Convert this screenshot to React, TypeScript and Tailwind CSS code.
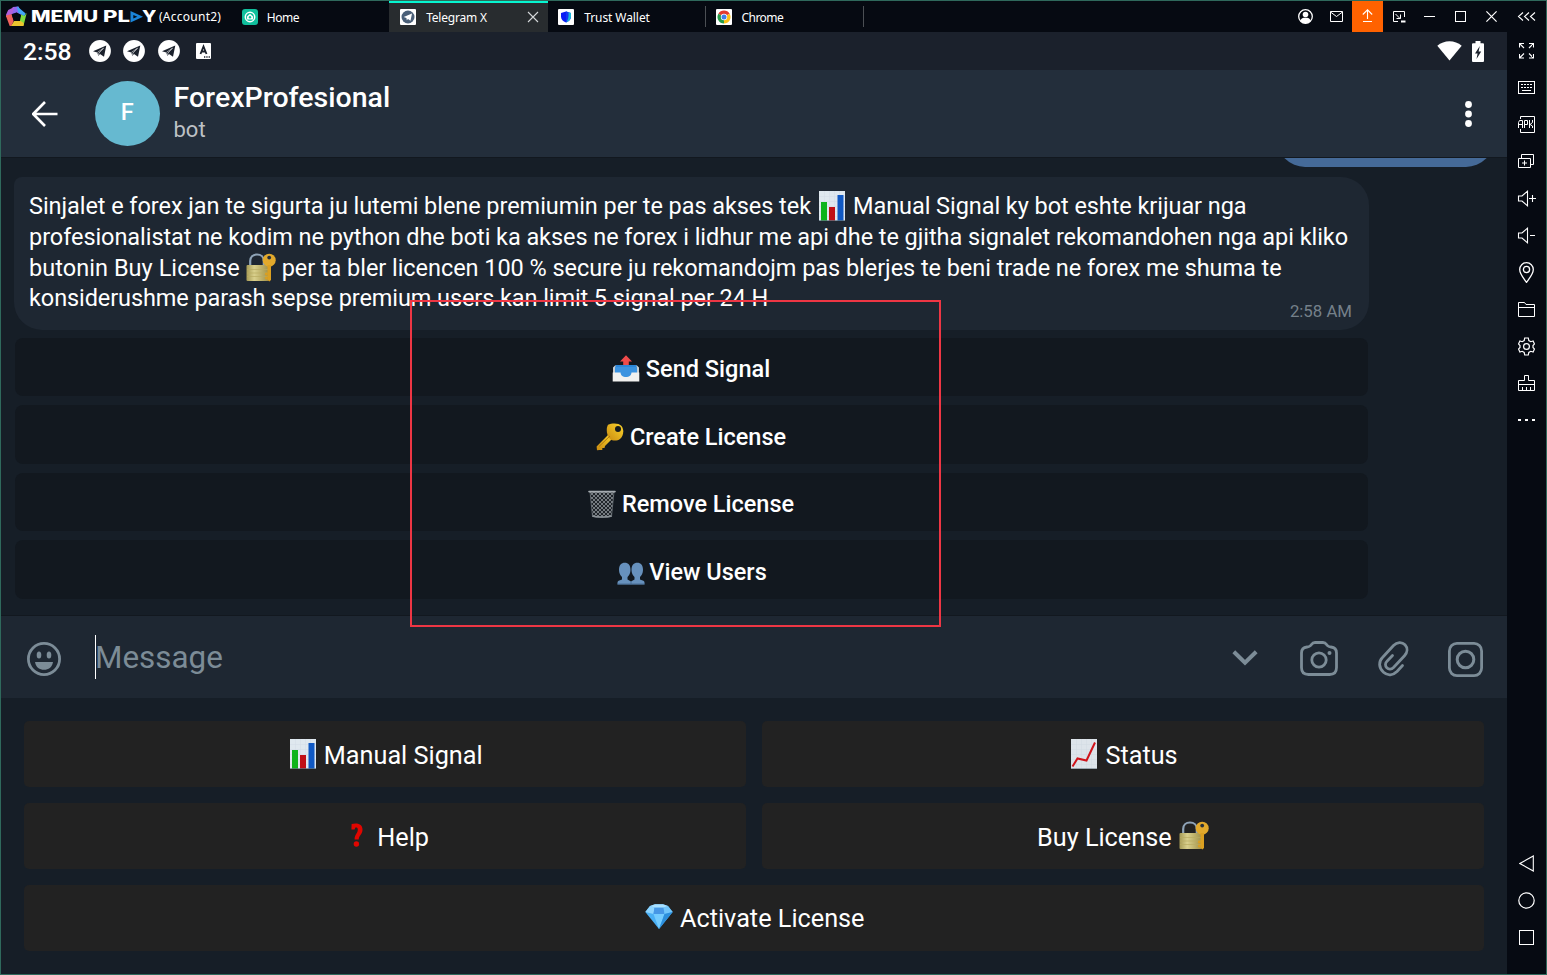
import React from "react";

type P = { className?: string };

const S = ({ w, h, vb, className, children }: { w: number; h: number; vb?: string; className?: string; children: React.ReactNode }) => (
  <svg width={w} height={h} viewBox={vb ?? `0 0 ${w} ${h}`} fill="none" className={"shrink-0 " + (className ?? "")}>
    {children}
  </svg>
);

/* ---------- emoji ---------- */
const BarChart = ({ className }: P) => (
  <S w={26} h={30} className={className}>
    <rect x="0" y="0" width="26" height="30" fill="#dfe8ef" />
    <path d="M0 5.5H26M0 10.5H26M0 15.5H26M0 20.5H26M0 25.5H26M5.5 0V30M10.5 0V30M15.5 0V30M20.5 0V30" stroke="#d2dde6" strokeWidth=".5" />
    <rect x="2" y="11" width="6" height="19" fill="#0db41c" />
    <rect x="10" y="16" width="6" height="14" fill="#c01016" />
    <rect x="18.500" y="4" width="6" height="26" fill="#1059c4" />
    <path d="M0 29.600H26" stroke="#5f7480" strokeWidth=".8" />
  </S>
);
const LineChart = () => (
  <S w={26} h={30}>
    <rect width="26" height="30" fill="#dde4ea" />
    <path d="M0 5.5H26M0 10.5H26M0 15.5H26M0 20.5H26M0 25.5H26M5.5 0V30M10.5 0V30M15.5 0V30M20.5 0V30" stroke="#d0dae2" strokeWidth=".5" />
    <path d="M1.500 27.500L6.500 19.500L15.500 21.500L24 3.500" stroke="#d0141b" strokeWidth="2" />
    <path d="M0 29.600H26" stroke="#7f8d97" strokeWidth=".8" />
  </S>
);
const LockKey = ({ className }: P) => (
  <S w={30} h={29} className={className}>
    <defs>
      <linearGradient id="brass" x1="0" x2="1">
        <stop offset="0" stopColor="#a59a55" />
        <stop offset=".35" stopColor="#d9d08c" />
        <stop offset="1" stopColor="#a2924a" />
      </linearGradient>
    </defs>
    <path d="M4.200 13V8C4.200 4 7 1.500 11 1.500s6.800 2.500 6.800 6.500V13" stroke="#8ea3b7" strokeWidth="2.200" />
    <rect x=".5" y="12" width="22" height="16" rx="1" fill="url(#brass)" />
    <path d="M1 16.500H22M1 20H22M1 23.500H22" stroke="#b9ac62" strokeWidth=".7" />
    <circle cx="23.200" cy="7.200" r="6.500" fill="#e2a92c" />
    <circle cx="23.200" cy="4.600" r="1.900" fill="#27303a" />
    <path d="M21.500 12H25V27L23.300 28.500L21.500 27Z" fill="#dba021" />
    <path d="M21.500 20H19.500V22H21.500M21.500 24H19.500V26H21.500" fill="#dba021" stroke="#dba021" strokeWidth=".8" />
  </S>
);
const Outbox = () => (
  <S w={28} h={27} className="mt-[4px]">
    <path d="M3.500 10H24.500L27 18H1Z" fill="#1b5fa8" />
    <path d="M4 10H24L26 14.500H2Z" fill="#2c86d8" />
    <path d="M1 12.500L3.500 10V18H1ZM27 12.500L24.500 10V18H27Z" fill="#c8cdd1" />
    <path d="M3 12H25V20L18 24H10L3 20Z" fill="#3b93e0" />
    <path d="M.7 17.500H8.500C9 21 11 22 14 22S19 21 19.500 17.500H27.300V26.500H.7Z" fill="#f1f1ef" />
    <path d="M14 .3L20 6.500H16.800V10H11.200V6.500H8Z" fill="#ef4b4b" />
  </S>
);
const KeyEmoji = () => (
  <S w={28} h={28} className="mt-[5px]">
    <defs>
      <linearGradient id="gold" x1="1" y1="0" x2="0" y2="1">
        <stop offset="0" stopColor="#fbd52c" />
        <stop offset="1" stopColor="#c98a10" />
      </linearGradient>
    </defs>
    <path d="M13 11L17 15L9 23L8.500 25H6.300V27H3.500L1 27.300L.6 23.500Z" fill="url(#gold)" />
    <path d="M12 1.800C16-.2 23-.2 25.500 3C28.500 7 27.500 13 24 16C21 18.300 16.500 18 14 16C11 13.500 9.500 6 12 1.800Z" fill="url(#gold)" />
    <path d="M3 23.500L14 13" stroke="#a8730d" strokeWidth=".9" />
    <circle cx="22" cy="6" r="3" fill="#151a1d" />
  </S>
);
const Trash = () => (
  <S w={28} h={28} className="mt-[3.500px]">
    <defs>
      <pattern id="mesh" width="4" height="4" patternUnits="userSpaceOnUse">
        <rect width="4" height="4" fill="#20252a" />
        <path d="M0 0L4 4M4 0L0 4" stroke="#8b9297" strokeWidth=".8" />
      </pattern>
    </defs>
    <path d="M2 2H26L23.500 26.500C19 27.700 9 27.700 4.500 26.500Z" fill="url(#mesh)" stroke="#737a80" strokeWidth=".7" />
    <path d="M1 1.600H27" stroke="#a5abb0" strokeWidth="1.600" strokeLinecap="round" />
    <path d="M4.300 26C9 27.400 19 27.400 23.700 26" stroke="#8a9196" strokeWidth="1.400" />
  </S>
);
const People = () => (
  <S w={28} h={23} className="mt-[7px] mr-[-2px] ml-[2px]">
    <g fill="#6791bd">
      <path d="M2 8C2 3 4.300.7 7.800.7S13.500 3 13.500 8C13.500 11.500 12 13.500 10.500 15V17.500L14 19.500V22.500H.5V20.500C.6 19 2 18.500 5 17.500V15C3.500 13.500 2 11.500 2 8Z" />
      <path d="M14.500 8C14.500 3 16.800.7 20.300.7S26 3 26 8C26 11.500 24.500 13.500 23 15V17.500C26 18.500 27.500 19 27.500 20.500V22.500H14V19.500L17.500 17.500V15C16 13.500 14.500 11.500 14.500 8Z" />
    </g>
    <path d="M14 19V22.500M.5 22H27.500" stroke="#41658c" strokeWidth=".8" />
  </S>
);
const Question = () => (
  <S w={12} h={24}>
    <path d="M.4 6.500L.6 1C4 0 11.500-.4 11.500 6.500C11.500 11.500 8 12 7.700 16.500H3.600C3.400 11.500 6.800 10.500 6.800 6.800C6.800 4.400 5.300 4.300 4.200 4.800L3.600 6.500Z" fill="#e10600" />
    <circle cx="5.400" cy="21" r="2.700" fill="#e10600" />
  </S>
);
const Gem = () => (
  <S w={28} h={25}>
    <path d="M5 2L10 .3H18L23 2L27.700 8L14 25L.3 8Z" fill="#4ab0f5" />
    <path d="M5 2L9.500 3.500L8.500 10L.3 8Z" fill="#8ed5ff" />
    <path d="M9.500 3.500H18.500L19.500 10H8.500Z" fill="#4697e6" />
    <path d="M23 2L18.500 3.500L19.500 10L27.700 8Z" fill="#72c6fb" />
    <path d="M8.500 10H19.500L14 25Z" fill="#74ccff" />
    <path d="M19.500 10L27.700 8L14 25Z" fill="#2d8fdc" />
    <path d="M5 2L10 .3H18L23 2L18.500 3.500H9.500Z" fill="#a9e0ff" />
  </S>
);

/* ---------- window bar ---------- */
const Brand = () => (
  <S w={150} h={22} className="ml-[5px]">
    <g transform="translate(-0.300 0)">
      <path d="M7 1L13 .5L16 9L11 6.500L6 8Z" fill="#9068f0" />
      <path d="M11 0L20 7.500L18.500 10.500L12.500 6.500Z" fill="#41a5f5" />
      <path d="M21 7L18 19L13.500 18.500L15.500 8.500L18.500 10Z" fill="#7fdc3d" />
      <path d="M18 20H5L8.500 15H15L18 17Z" fill="#ecc52e" />
      <path d="M0 9.500L5.500 7L8 15L5.500 20H4Z" fill="#f0625d" />
      <path d="M0 9.500L2.500 4L8.500 1L6.500 8Z" fill="#b060dc" />
      <path d="M10.500 6.500L15 9.800L13.300 14.700H8.200L6.500 9.800Z" fill="#060a12" />
    </g>
    <text x="25" y="16.300" textLength="67" lengthAdjust="spacingAndGlyphs" fontFamily="Inter" fontWeight="800" fontSize="15.300" fill="#fff">MEMU</text>
    <text x="97" y="16.300" textLength="27" lengthAdjust="spacingAndGlyphs" fontFamily="Inter" fontWeight="800" fontSize="15.300" fill="#fff">PL</text>
    <path d="M124.500 5L137 10.800L124.500 16.500Z" fill="#1a84d8" />
    <path d="M127.300 9L131.300 10.800L127.300 12.600Z" fill="#060a12" />
    <text x="136" y="16.300" textLength="14.500" lengthAdjust="spacingAndGlyphs" fontFamily="Inter" fontWeight="800" fontSize="15.300" fill="#fff">Y</text>
  </S>
);
const HomeIcon = () => (
  <S w={16} h={16}>
    <rect width="16" height="16" rx="3" fill="#10bf9c" />
    <circle cx="8" cy="8" r="4.700" stroke="#fff" strokeWidth="1.500" />
    <path d="M8 4.800L11 7.500V10.500H5V7.500Z" fill="#fff" />
    <circle cx="8" cy="8.300" r="1.200" fill="#10bf9c" />
  </S>
);
const TgIcon = () => (
  <S w={16} h={16}>
    <rect width="16" height="16" rx="1" fill="#fff" />
    <circle cx="8" cy="8" r="6.500" fill="#4a5f78" />
    <path d="M3.700 8L12 4.500L10.500 11.800L8 10L6.800 11.200L6.400 9Z" fill="#fff" />
  </S>
);
const TrustIcon = () => (
  <S w={16} h={16}>
    <rect width="16" height="16" rx="1" fill="#fff" />
    <path d="M8 2.500L13 4V7.500C13 10.500 11 12.300 8 13.500C5 12.300 3 10.500 3 7.500V4Z" fill="#0a1df5" />
    <path d="M8 2.500L13 4V7.500C13 10.500 11 12.300 8 13.500C10 10 10 6 8 2.500Z" fill="#18b9d8" />
    <path d="M8 2.500L10.500 3.300C11 8 10 11 8 13.500Z" fill="#1437f2" />
  </S>
);
const ChromeIcon = () => (
  <S w={16} h={16}>
    <rect width="16" height="16" rx="1" fill="#fff" />
    <path d="M8 8L2.370 4.750A6.500 6.500 0 0 1 13.630 4.750Z" fill="#e33b2e" />
    <path d="M8 8L13.630 4.750A6.500 6.500 0 0 1 8 14.500Z" fill="#fbc116" />
    <path d="M8 8L8 14.500A6.500 6.500 0 0 1 2.370 4.750Z" fill="#269c48" />
    <circle cx="8" cy="8" r="3.200" fill="#fff" />
    <circle cx="8" cy="8" r="2.500" fill="#3f7fe8" />
  </S>
);

const Tab = ({ icon, label, active, sep, track }: { icon: React.ReactNode; label: string; active?: boolean; sep?: boolean; track: string }) => (
  <div
    className={
      "flex h-full items-center pl-[10.800px] " +
      (active ? "mr-[-0.800px] w-[159px] border-t-2 border-[#06f5d0] bg-[#282c2f] pb-[2px]" : "w-[158.200px]")
    }
  >
    <div className="flex h-4 w-4 items-center">{icon}</div>
    <span className={"mt-[2px] flex-1 text-[12px] leading-4 whitespace-nowrap " + track}>{label}</span>
    {active && (
      <S w={12} h={12} className="mr-[9px]">
        <path d="M1 1L11 11M11 1L1 11" stroke="#d5d8da" strokeWidth="1.100" />
      </S>
    )}
    {sep && <div className="h-[21px] w-px bg-[#4b4f54]" />}
  </div>
);

const WinBtn = ({ children, hot }: { children: React.ReactNode; hot?: boolean }) => (
  <div className={"flex h-full w-[31px] items-center justify-center " + (hot ? "bg-[#ff6200]" : "")}>{children}</div>
);

const TitleBar = () => (
  <div className="flex h-[31px] items-center bg-[#060a12] font-['Noto_Sans',sans-serif] text-white">
    <div className="flex w-[230px] items-center">
      <Brand />
      <span className="ml-[3px] text-[12px] leading-4 tracking-[0.250px]">(Account2)</span>
    </div>
    <Tab icon={<HomeIcon />} label="Home" track="ml-[9px] tracking-[-0.500px]" />
    <Tab icon={<TgIcon />} label="Telegram X" active track="ml-[10.200px] tracking-[-0.200px]" />
    <Tab icon={<TrustIcon />} label="Trust Wallet" sep track="ml-[10px] tracking-[-0.080px]" />
    <Tab icon={<ChromeIcon />} label="Chrome" sep track="ml-[9px] tracking-[-0.500px]" />
    <div className="flex-1" />
    <WinBtn>
      <S w={15} h={15}>
        <circle cx="7.500" cy="7.500" r="6.800" stroke="#fff" strokeWidth="1.300" />
        <circle cx="7.500" cy="5.500" r="2.800" fill="#fff" />
        <path d="M2.500 12C3 9 5 8.700 7.500 8.700S12 9 12.500 12C10 15 5 15 2.500 12Z" fill="#fff" />
      </S>
    </WinBtn>
    <WinBtn>
      <S w={13} h={11}>
        <path d="M.5.5H12.500V10.500H.5ZM.5 1L6.500 5.500L12.500 1" stroke="#fff" />
      </S>
    </WinBtn>
    <WinBtn hot>
      <S w={11} h={13} className="mb-[2px]">
        <path d="M5.500 10V.8M.8 5.500L5.500.8L10.200 5.500M1 12.500H10" stroke="#fff" strokeWidth="1.100" />
      </S>
    </WinBtn>
    <WinBtn>
      <S w={13} h={13} className="ml-[2px]">
        <path d="M5 11.500H.5V1.500H11.500V7M2.500 4L7 8.500M7.500 4.500V8.500H3.500" stroke="#fff" />
        <path d="M8 10.500H12.500V12.500H8Z" fill="#fff" />
      </S>
    </WinBtn>
    <WinBtn>
      <div className="h-px w-[11px] bg-white" />
    </WinBtn>
    <WinBtn>
      <div className="h-[11px] w-[11px] border border-white" />
    </WinBtn>
    <WinBtn>
      <S w={11} h={11}>
        <path d="M.4.4L10.600 10.600M10.600.4L.4 10.600" stroke="#fff" strokeWidth="1.200" />
      </S>
    </WinBtn>
    <div className="flex w-[39px] items-center justify-center">
      <S w={19} h={9} vb="-0.7 0 19 9">
        <path d="M5.300.5L.8 4.500L5.300 8.500M11.300.5L6.800 4.500L11.300 8.500M17.300.5L12.800 4.500L17.300 8.500" stroke="#fff" strokeWidth="1.100" />
      </S>
    </div>
  </div>
);

/* ---------- tool bar on the right ---------- */
const tools: React.ReactNode[] = [
  <S w={15} h={17}>
    <path d="M.5 5.500V1.500H5M.5 1.500L5 6M10 1.500H14.500V5.500M14.500 1.500L10 6M.5 12V16H5M.5 16L5 11.500M10 16H14.500V12M14.500 16L10 11.500" stroke="#fff" strokeWidth="1.100" />
  </S>,
  <S w={17} h={13}>
    <rect x=".5" y=".5" width="16" height="12" stroke="#fff" />
    <path d="M3 3.500H14M3 6.500H14" stroke="#fff" strokeDasharray="2 1" />
    <path d="M4 9.500H13" stroke="#fff" />
  </S>,
  <S w={17} h={17}>
    <path d="M2.500 3V.5H16.500V16.500H2.500V13" stroke="#fff" />
    <path d="M.5 12V6.500L1.500 4.500H4.500V12M.5 8.500H4.500M6.500 12V4.500H9.500V8.500H6.500M11.500 4V12M14.500 4V6.500L12 8.500L14.500 10V12" stroke="#fff" />
  </S>,
  <S w={17} h={15}>
    <path d="M3.500 4V.5H15.500V10.500H12.500M.5 4.500H12.500V13.500H.5ZM6.500 6.500V11.500M4 9H9" stroke="#fff" />
  </S>,
  <S w={19} h={17} vb="-1 0 19 17">
    <path d="M.5 6H4L9.500 1.200V15.800L4 11H.5ZM11 8.500H18M14.500 5V12" stroke="#fff" strokeWidth="1.100" />
  </S>,
  <S w={19} h={17} vb="-1 0 19 17">
    <path d="M.5 6H4L9.500 1.200V15.800L4 11H.5ZM12 8.500H17" stroke="#fff" strokeWidth="1.100" />
  </S>,
  <S w={15} h={21}>
    <path d="M7.500 20.300C4.500 16 .7 12 .7 7.500A6.800 6.800 0 0 1 14.300 7.500C14.300 12 10.500 16 7.500 20.300Z" stroke="#fff" strokeWidth="1.300" />
    <circle cx="7.500" cy="7.500" r="3.100" stroke="#fff" strokeWidth="1.300" />
  </S>,
  <S w={17} h={15}>
    <path d="M.5 14.500V.5H6.500L8 2.500H16.500V14.500ZM.5 5.500H16.500" stroke="#fff" />
  </S>,
  <S w={17} h={19} vb="0.500 -0.500 17 19">
    <path d="M7.200.5H10.800L11.300 3L13.300 4.200L15.600 3.500L17 6.500L15.500 8V10L17 11.500L15.600 14.500L13.300 13.800L11.300 15L10.800 17.500H7.200L6.700 15L4.700 13.800L2.400 14.500L1 11.500L2.500 10V8L1 6.500L2.400 3.500L4.700 4.200L6.700 3Z" stroke="#fff" strokeWidth="1.200" />
    <circle cx="9" cy="9" r="2.900" stroke="#fff" strokeWidth="1.200" />
  </S>,
  <S w={17} h={17}>
    <path d="M.5 15.500V5.500H6.500V.5H10.500V5.500H16.500V15.500ZM.5 9.500H16.500M4.500 12V15.500M8.500 12V15.500M12.500 12V15.500" stroke="#fff" />
  </S>,
  <S w={17} h={3}>
    <path d="M0 1H3M7 1H10M14 1H17" stroke="#fff" strokeWidth="2" />
  </S>,
];
const navs: React.ReactNode[] = [
  <S w={15} h={17}>
    <path d="M14.300 1V16L.9 8.500Z" stroke="#fff" strokeWidth="1.100" />
  </S>,
  <S w={17} h={17}>
    <circle cx="8.500" cy="8.500" r="7.700" stroke="#fff" strokeWidth="1.200" />
  </S>,
  <div className="h-[15px] w-[15px] border border-white" />,
];

const Slot = ({ children }: { children: React.ReactNode }) => (
  <div className="flex h-[37px] w-full shrink-0 items-center justify-center">{children}</div>
);

const SideBar = () => (
  <div className="flex w-[39px] flex-col items-center bg-[#060a12] pb-[18px]">
    {tools.map((t, i) => (
      <Slot key={i}>{t}</Slot>
    ))}
    <div className="flex-1" />
    {navs.map((t, i) => (
      <Slot key={i}>{t}</Slot>
    ))}
  </div>
);

/* ---------- android screen ---------- */
const Plane = () => (
  <S w={22} h={22}>
    <circle cx="11" cy="11" r="10.900" fill="#fff" />
    <path d="M4 11.200L17.300 5.500L15 16.800L11 14L9.300 16L8.300 12.600Z" fill="#1b212c" />
    <path d="M8.500 12.400L14.500 8.200L9.900 13.200L9.400 15.500" stroke="#fff" strokeWidth=".6" />
  </S>
);

const StatusBar = () => (
  <div className="flex h-[38px] items-center bg-[#1b212c] pr-[23px] pl-[22px] text-white">
    <span className="mt-px w-[65.700px] text-[24.700px] leading-[30px] font-medium">2:58</span>
    <div className="flex items-center gap-[12.500px]">
      <Plane />
      <Plane />
      <Plane />
    </div>
    <S w={15} h={16} className="ml-[16px]">
      <rect width="15" height="16" rx="1" fill="#fff" />
      <path d="M4.500 11L7.500 3.500L10.500 11M5.500 8.500H9.500" stroke="#1b212c" strokeWidth="1.800" />
      <path d="M8 14H14" stroke="#1b212c" strokeWidth="1.300" strokeDasharray="1.300 1" />
    </S>
    <div className="flex-1" />
    <S w={25} h={20}>
      <path d="M12.500 19.500L.3 4.800C7-1.300 18-1.300 24.700 4.800Z" fill="#fff" />
    </S>
    <S w={12} h={21} className="ml-[10px]">
      <path d="M3.500 0H8.500V2.200H11Q12 2.200 12 3.200V20Q12 21 11 21H1Q0 21 0 20V3.200Q0 2.200 1 2.200H3.500Z" fill="#fff" />
      <path d="M7.800 5L3 12.500H5.600L4.500 18L9.200 10.500H6.600Z" fill="#1b212c" />
    </S>
  </div>
);

const Header = () => (
  <div className="flex h-[87px] items-center bg-[#232e3b] pr-[35px] pl-[31px]">
    <S w={26} h={26}>
      <path d="M25.500 13H1.500M13 1L1.200 13L13 25" stroke="#fff" strokeWidth="2.600" />
    </S>
    <div className="ml-[37px] flex h-[64.500px] w-[64.500px] items-center justify-center rounded-full bg-[#66b9d0] pb-[2px] text-[23.500px] font-medium text-white">F</div>
    <div className="ml-[14px] flex-1">
      <div className="text-[28.500px] leading-8 font-medium text-white">ForexProfesional</div>
      <div className="text-[22px] leading-8 text-[#bdc1c5]">bot</div>
    </div>
    <S w={7} h={26}>
      <circle cx="3.500" cy="3.500" r="3.400" fill="#fff" />
      <circle cx="3.500" cy="13" r="3.400" fill="#fff" />
      <circle cx="3.500" cy="22.500" r="3.400" fill="#fff" />
    </S>
  </div>
);

const Line = ({ children }: { children: React.ReactNode }) => (
  <div className="flex h-[30.700px] items-center whitespace-pre">{children}</div>
);

const Inline = ({ icon, label }: { icon: React.ReactNode; label: string }) => (
  <div className="flex h-[58.500px] items-center justify-center gap-[6px] rounded-[8px] bg-[#12181f] pr-px">
    {icon}
    <span className="mt-[4.800px] text-[23.500px] leading-7 font-medium whitespace-nowrap text-white">{label}</span>
  </div>
);

const Chat = () => (
  <div className="flex h-[459px] flex-col overflow-hidden border-y border-[#12181f] bg-[#161e27]">
    <div className="-mt-[51px] ml-[1275.500px] h-[59.500px] w-[217px] shrink-0 rounded-[28px] bg-[#456a98]" />
    <div className="mt-[10px] ml-[13px] h-[153px] w-[1355px] shrink-0 rounded-[28px] rounded-tl-[8px] bg-[#1e2732] pt-[14px] pl-[15px] text-[23.500px] tracking-[-0.062px] text-white">
      <Line>
        <span className="pt-[1.600px]">Sinjalet e forex jan te sigurta ju lutemi blene premiumin per te pas akses tek</span>
        <BarChart className="mr-[8px] ml-[8px]" />
        <span className="pt-[1.600px]">Manual Signal ky bot eshte krijuar nga</span>
      </Line>
      <Line>
        <span className="pt-[1.600px]">profesionalistat ne kodim ne python dhe boti ka akses ne forex i lidhur me api dhe te gjitha signalet rekomandohen nga api kliko</span>
      </Line>
      <Line>
        <span className="pt-[2px] tracking-[0.050px]">butonin Buy License</span>
        <LockKey className="mr-[6px] ml-[6px]" />
        <span className="pt-[2px] tracking-[-0.052px]">per ta bler licencen 100 % secure ju rekomandojm pas blerjes te beni trade ne forex me shuma te</span>
      </Line>
      <div className="flex justify-between pr-[17px]">
        <Line>
          <span className="pt-[1.600px] tracking-[-0.090px]">konsiderushme parash sepse premium users kan limit 5 signal per 24 H</span>
        </Line>
        <span className="mt-[16px] text-[16.800px] leading-6 tracking-normal text-[#75808a]">2:58 AM</span>
      </div>
    </div>
    <div className="mt-[8px] ml-[14px] flex w-[1353px] flex-col gap-[9.100px]">
      <Inline icon={<Outbox />} label="Send Signal" />
      <Inline icon={<KeyEmoji />} label="Create License" />
      <Inline icon={<Trash />} label="Remove License" />
      <Inline icon={<People />} label="View Users" />
    </div>
  </div>
);

const Composer = () => (
  <div className="flex h-[82px] items-center bg-[#1e2732] pr-[24px] pl-[26px] text-[#7c8c97]">
    <S w={34} h={34} className="mt-[4px]">
      <circle cx="17" cy="17" r="15.600" stroke="currentColor" strokeWidth="2.800" />
      <ellipse cx="12" cy="13" rx="2.300" ry="3.500" fill="currentColor" />
      <ellipse cx="22" cy="13" rx="2.300" ry="3.500" fill="currentColor" />
      <path d="M8 20H26C25 25.500 21.500 27.800 17 27.800S9 25.500 8 20Z" fill="currentColor" />
    </S>
    <div className="ml-[34px] h-[44px] w-px bg-white" />
    <span className="-ml-px flex-1 pt-[1.800px] text-[31.400px] leading-10">Message</span>
    <S w={26} h={16} className="mt-[2px] mr-px">
      <path d="M1.800 1.800L13 12.800L24.200 1.800" stroke="currentColor" strokeWidth="4" />
    </S>
    <S w={38} h={36} className="mt-[4px] ml-[41px]">
      <path d="M1.500 12Q1.500 6.500 7 6L9 5.500Q10.500 5 11.500 3.500Q12.800 1.500 15 1.500H23Q25.200 1.500 26.500 3.500Q27.500 5 29 5.500L31 6Q36.500 6.500 36.500 12V26.500Q36.500 33.500 29.500 33.500H8.500Q1.500 33.500 1.500 26.500Z" stroke="currentColor" strokeWidth="2.800" />
      <circle cx="19" cy="19" r="7.200" stroke="currentColor" strokeWidth="2.800" />
      <circle cx="29.500" cy="12" r="2" fill="currentColor" />
    </S>
    <S w={32} h={36} className="mt-[4px] ml-[38.500px]">
      <path d="M25.500 24.500L20 30.500C16 34.500 10.500 35 6.500 31.300C1.500 26.500 1.500 20.500 5.500 16.500L16.500 4.500C20 1 25 .8 28 3.800C31 7 30.500 11.500 27.500 14.800L16.500 26.500C14.500 28.500 11.500 28.500 9.800 26.800C8 25 8 22.200 10 20.300L15.500 14.500" stroke="currentColor" strokeWidth="2.800" strokeLinecap="round" />
    </S>
    <S w={35} h={35} className="mt-[4px] ml-[39.500px]">
      <rect x="1.400" y="1.400" width="32.200" height="32.200" rx="7.500" stroke="currentColor" strokeWidth="2.800" />
      <circle cx="17.500" cy="17.500" r="8.300" stroke="currentColor" strokeWidth="3" />
    </S>
  </div>
);

const Key = ({ children, wide }: { children: React.ReactNode; wide?: boolean }) => (
  <div
    className={
      "flex h-[66px] items-center justify-center rounded-[5px] bg-[#222222] text-[25.250px] whitespace-nowrap text-white " +
      (wide ? "col-span-2" : "")
    }
  >
    {children}
  </div>
);

const Keyboard = () => (
  <div className="flex-1 bg-[#161e27] px-[23.400px] pt-[23.400px]">
    <div className="grid grid-cols-2 gap-x-4 gap-y-[15.700px]">
      <Key>
        <BarChart className="mr-[8px] mb-[1.500px] ml-[2px]" />
        <span className="pt-[3px]">Manual Signal</span>
      </Key>
      <Key>
        <div className="mr-[8px] mb-[1.500px] ml-[3.500px]">
          <LineChart />
        </div>
        <span className="pt-[3px]">Status</span>
      </Key>
      <Key>
        <div className="mr-[14px] mb-[2px] ml-[10px]">
          <Question />
        </div>
        <span className="pt-[3px]">Help</span>
      </Key>
      <Key>
        <span className="pt-[3px]">Buy License</span>
        <LockKey className="mb-[2px] ml-[7px]" />
      </Key>
      <Key wide>
        <div className="mr-[7px] mb-[2px] ml-[1.500px]">
          <Gem />
        </div>
        <span className="pt-[3px]">Activate License</span>
      </Key>
    </div>
  </div>
);

export default function App() {
  return (
    <div className="relative flex h-[975px] w-[1547px] flex-col overflow-hidden border border-[#2f695c] bg-[#060a12]">
      <TitleBar />
      <div className="flex min-h-0 flex-1">
        <div className="flex w-[1506px] flex-col font-[Roboto,sans-serif]">
          <StatusBar />
          <Header />
          <Chat />
          <Composer />
          <Keyboard />
        </div>
        <SideBar />
      </div>
      <div className="pointer-events-none absolute top-[299px] left-[409px] h-[327px] w-[531px] border-2 border-[#ee3644]" />
    </div>
  );
}
